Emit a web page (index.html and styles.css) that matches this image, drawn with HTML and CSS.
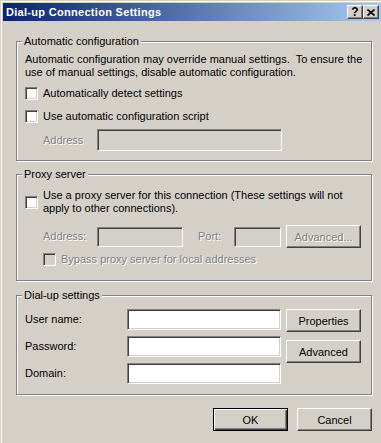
FILE: index.html
```html
<!DOCTYPE html>
<html lang="en">
<head>
  <meta charset="UTF-8" />
  <meta name="viewport" content="width=device-width, initial-scale=1.0" />
  <title>Dial-up Connection Settings</title>
  <link rel="stylesheet" href="styles.css">
</head>
<body>

  <div class="window">
    <div class="titlebar">
      <span class="title">Dial-up Connection Settings</span>
      <div class="caption-buttons">
        <span class="cap-btn help">?</span>
        <span class="cap-btn close">
          <svg width="8" height="7" viewBox="0 0 8 7"><path d="M0.5 0.5 L7.5 6.5 M7.5 0.5 L0.5 6.5" stroke="#000" stroke-width="1.6" fill="none"/></svg>
        </span>
      </div>
    </div>

    <div class="content">
      <div class="group group-auto">
        <div class="legend">Automatic configuration</div>
        <p class="note">Automatic configuration may override manual settings.&nbsp; To ensure the<br>use of manual settings, disable automatic configuration.</p>
        <div class="check-row first">
          <span class="checkbox"></span>
          <span>Automatically detect settings</span>
        </div>
        <div class="check-row second">
          <span class="checkbox"></span>
          <span>Use automatic configuration script</span>
        </div>
        <div class="field-row script-row">
          <span class="label disabled addr-label">Address</span>
          <span class="textbox disabled script-box"></span>
        </div>
      </div>

      <div class="group group-proxy">
        <div class="legend">Proxy server</div>
        <div class="check-row proxy-check">
          <span class="checkbox"></span>
          <span>Use a proxy server for this connection (These settings will not<br>apply to other connections).</span>
        </div>
        <div class="field-row proxy-row">
          <span class="label disabled addr-label">Address:</span>
          <span class="textbox disabled proxy-box"></span>
          <span class="label disabled port-label">Port:</span>
          <span class="textbox disabled port-box"></span>
          <button class="btn disabled-btn" disabled>Advanced...</button>
        </div>
        <div class="check-row bypass">
          <span class="checkbox disabled"></span>
          <span class="disabled">Bypass proxy server for local addresses</span>
        </div>
      </div>

      <div class="group group-dialup">
        <div class="legend">Dial-up settings</div>
        <div class="dialup-body">
          <div class="dialup-fields">
            <div class="dialup-row">
              <span class="dialup-label">User name:</span>
              <span class="textbox dialup-box"></span>
            </div>
            <div class="dialup-row">
              <span class="dialup-label">Password:</span>
              <span class="textbox dialup-box"></span>
            </div>
            <div class="dialup-row">
              <span class="dialup-label">Domain:</span>
              <span class="textbox dialup-box"></span>
            </div>
          </div>
          <div class="dialup-buttons">
            <button class="btn">Properties</button>
            <button class="btn">Advanced</button>
          </div>
        </div>
      </div>

      <div class="actions">
        <button class="btn default">OK</button>
        <button class="btn">Cancel</button>
      </div>
    </div>
  </div>

</body>
</html>
```

FILE: styles.css
```css
body {
  margin: 0;
  font-family: "Liberation Sans", Arial, sans-serif;
  font-size: 11px;
  line-height: 13px;
  color: #000;
  background: #d4d0c8;
}
.window {
  width: 381px;
  height: 443px;
  box-sizing: border-box;
  padding: 3px 0 0 3px;
  background: #d4d0c8;
  box-shadow: inset 1px 1px #d4d0c8, inset 2px 2px #fff;
  overflow: hidden;
}
.titlebar {
  height: 18px;
  display: flex;
  align-items: center;
  justify-content: space-between;
  padding: 0 2px 0 3px;
  background: linear-gradient(90deg, #0a246a 0%, #a6caf0 100%);
}
.title {
  color: #fff;
  font-weight: bold;
  letter-spacing: 0.3px;
}
.caption-buttons {
  display: flex;
}
.cap-btn {
  width: 16px;
  height: 14px;
  box-sizing: border-box;
  display: flex;
  align-items: center;
  justify-content: center;
  background: #d4d0c8;
  border: 1px solid;
  border-color: #fff #404040 #404040 #fff;
  box-shadow: inset -1px -1px #808080;
  font-weight: bold;
  font-size: 12px;
  line-height: 11px;
}
.content {
  padding: 20px 0 0 13px;
}
.group {
  width: 356px;
  box-sizing: border-box;
  border: 1px solid #808080;
  box-shadow: inset 1px 1px #fff, 1px 1px #fff;
  padding-left: 8px;
}
.group-auto {
  height: 120px;
}
.group-proxy {
  height: 107px;
  margin-top: 13px;
}
.group-dialup {
  height: 100px;
  margin-top: 14px;
}
.legend {
  display: table;
  margin: -7px 0 0 -3px;
  padding: 0 2px;
  background: #d4d0c8;
}
.note {
  margin: 5px 0 0;
}
.check-row {
  display: flex;
  align-items: center;
  gap: 5px;
}
.check-row.first {
  margin-top: 8px;
}
.check-row.second {
  margin-top: 10px;
}
.check-row.proxy-check {
  margin-top: 8px;
}
.check-row.bypass {
  margin-top: 5px;
  padding-left: 18px;
}
.checkbox {
  width: 13px;
  height: 13px;
  flex: none;
  box-sizing: border-box;
  background: #fff;
  border: 1px solid;
  border-color: #808080 #fff #fff #808080;
  box-shadow: inset 1px 1px #404040, inset -1px -1px #d4d0c8;
}
.checkbox.disabled {
  background: #d4d0c8;
}
.disabled {
  color: #808080;
  text-shadow: 1px 1px 0 #fff;
}
.field-row {
  display: flex;
  align-items: center;
  padding-left: 18px;
}
.script-row {
  margin-top: 6px;
}
.proxy-row {
  margin-top: 10px;
}
.addr-label {
  width: 54px;
}
.port-label {
  width: 36px;
  margin-left: 15px;
}
.textbox {
  display: block;
  height: 21px;
  box-sizing: border-box;
  background: #fff;
  border: 1px solid;
  border-color: #808080 #fff #fff #808080;
  box-shadow: inset 1px 1px #404040, inset -1px -1px #d4d0c8;
}
.textbox.disabled {
  background: #d4d0c8;
}
.script-box {
  width: 185px;
  height: 22px;
}
.proxy-box {
  width: 86px;
  height: 20px;
}
.port-box {
  width: 47px;
  height: 20px;
}
.btn {
  width: 75px;
  height: 23px;
  box-sizing: border-box;
  padding: 0;
  font-family: inherit;
  font-size: 11px;
  color: #000;
  background: #d4d0c8;
  border: 1px solid;
  border-color: #fff #404040 #404040 #fff;
  box-shadow: inset -1px -1px #808080;
}
.btn.default {
  border: 1px solid #000;
  box-shadow: inset 1px 1px #fff, inset -1px -1px #404040, inset -2px -2px #808080;
}
.disabled-btn {
  margin-left: 5px;
  color: #808080;
  text-shadow: 1px 1px 0 #fff;
}
.dialup-body {
  display: flex;
  margin-top: 7px;
}
.dialup-fields {
  display: flex;
  flex-direction: column;
  gap: 6px;
}
.dialup-row {
  display: flex;
  align-items: center;
}
.dialup-label {
  width: 102px;
}
.dialup-box {
  width: 154px;
}
.dialup-buttons {
  display: flex;
  flex-direction: column;
  gap: 8px;
  margin-left: 5px;
}
.actions {
  width: 356px;
  display: flex;
  justify-content: flex-end;
  gap: 9px;
  margin-top: 13px;
}
```
